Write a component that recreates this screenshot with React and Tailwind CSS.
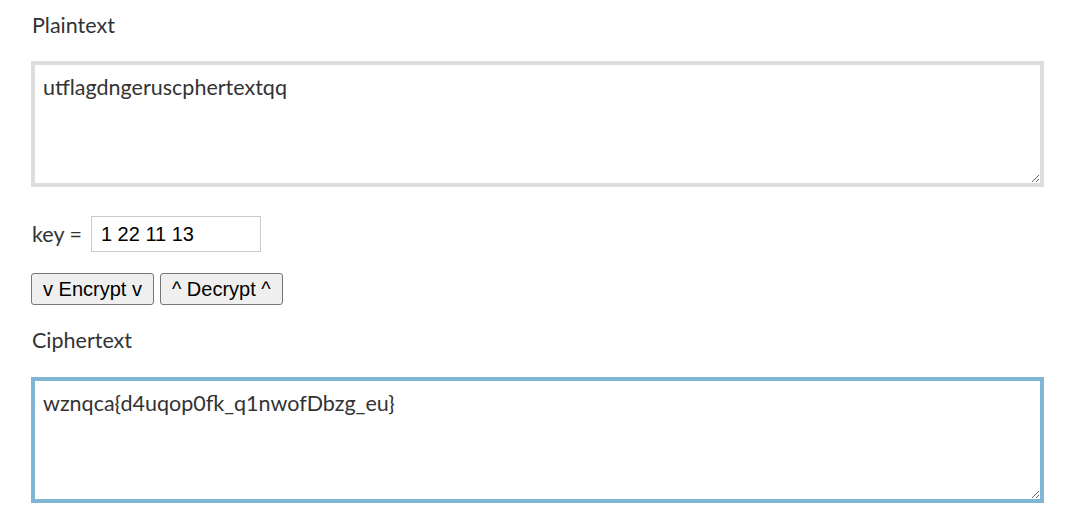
import React from "react";

export default function App() {
  const sans = { fontFamily: 'Lato, "Open Sans", sans-serif' };
  const arial = { fontFamily: '"Liberation Sans", Arial, sans-serif' };
  return (
    <div className="bg-white w-[1071px] h-[519px] overflow-hidden pl-[31px] pr-[27px] text-[#333]" style={sans}>
      <div className="h-[61px] pt-[12px] text-[21.5px] leading-[26px] pl-[1px]">Plaintext</div>
      <textarea
        className="block w-[1013px] h-[126px] border-4 border-[#dddddd] px-[8px] py-[8px] text-[21.5px] leading-[28px] text-[#333] outline-none resize-y"
        style={sans}
        defaultValue="utflagdngeruscphertextqq"
      />
      <div className="flex items-center mt-[29px] h-[36px]">
        <span className="text-[21.5px] pl-[1px] mr-[9px]">key =</span>
        <input
          className="w-[170px] h-[36px] border border-[#cccccc] px-[9px] text-[20px] text-black outline-none"
          style={arial}
          defaultValue="1 22 11 13"
        />
      </div>
      <div className="flex gap-[6px] mt-[21px]" style={arial}>
        <button className="h-[32px] px-[11px] text-[20px] text-black bg-[#efefef] border border-[#767676] rounded-[3px]">v Encrypt v</button>
        <button className="h-[32px] px-[11px] text-[20px] text-black bg-[#efefef] border border-[#767676] rounded-[3px]">^ Decrypt ^</button>
      </div>
      <div className="h-[72px] pt-[22px] text-[21.5px] leading-[26px] pl-[1px]">Ciphertext</div>
      <textarea
        className="block w-[1013px] h-[126px] border-4 border-[#7fb5d5] px-[8px] py-[8px] text-[21.5px] leading-[28px] text-[#333] outline-none resize-y"
        style={sans}
        defaultValue="wznqca{d4uqop0fk_q1nwofDbzg_eu}"
      />
    </div>
  );
}
